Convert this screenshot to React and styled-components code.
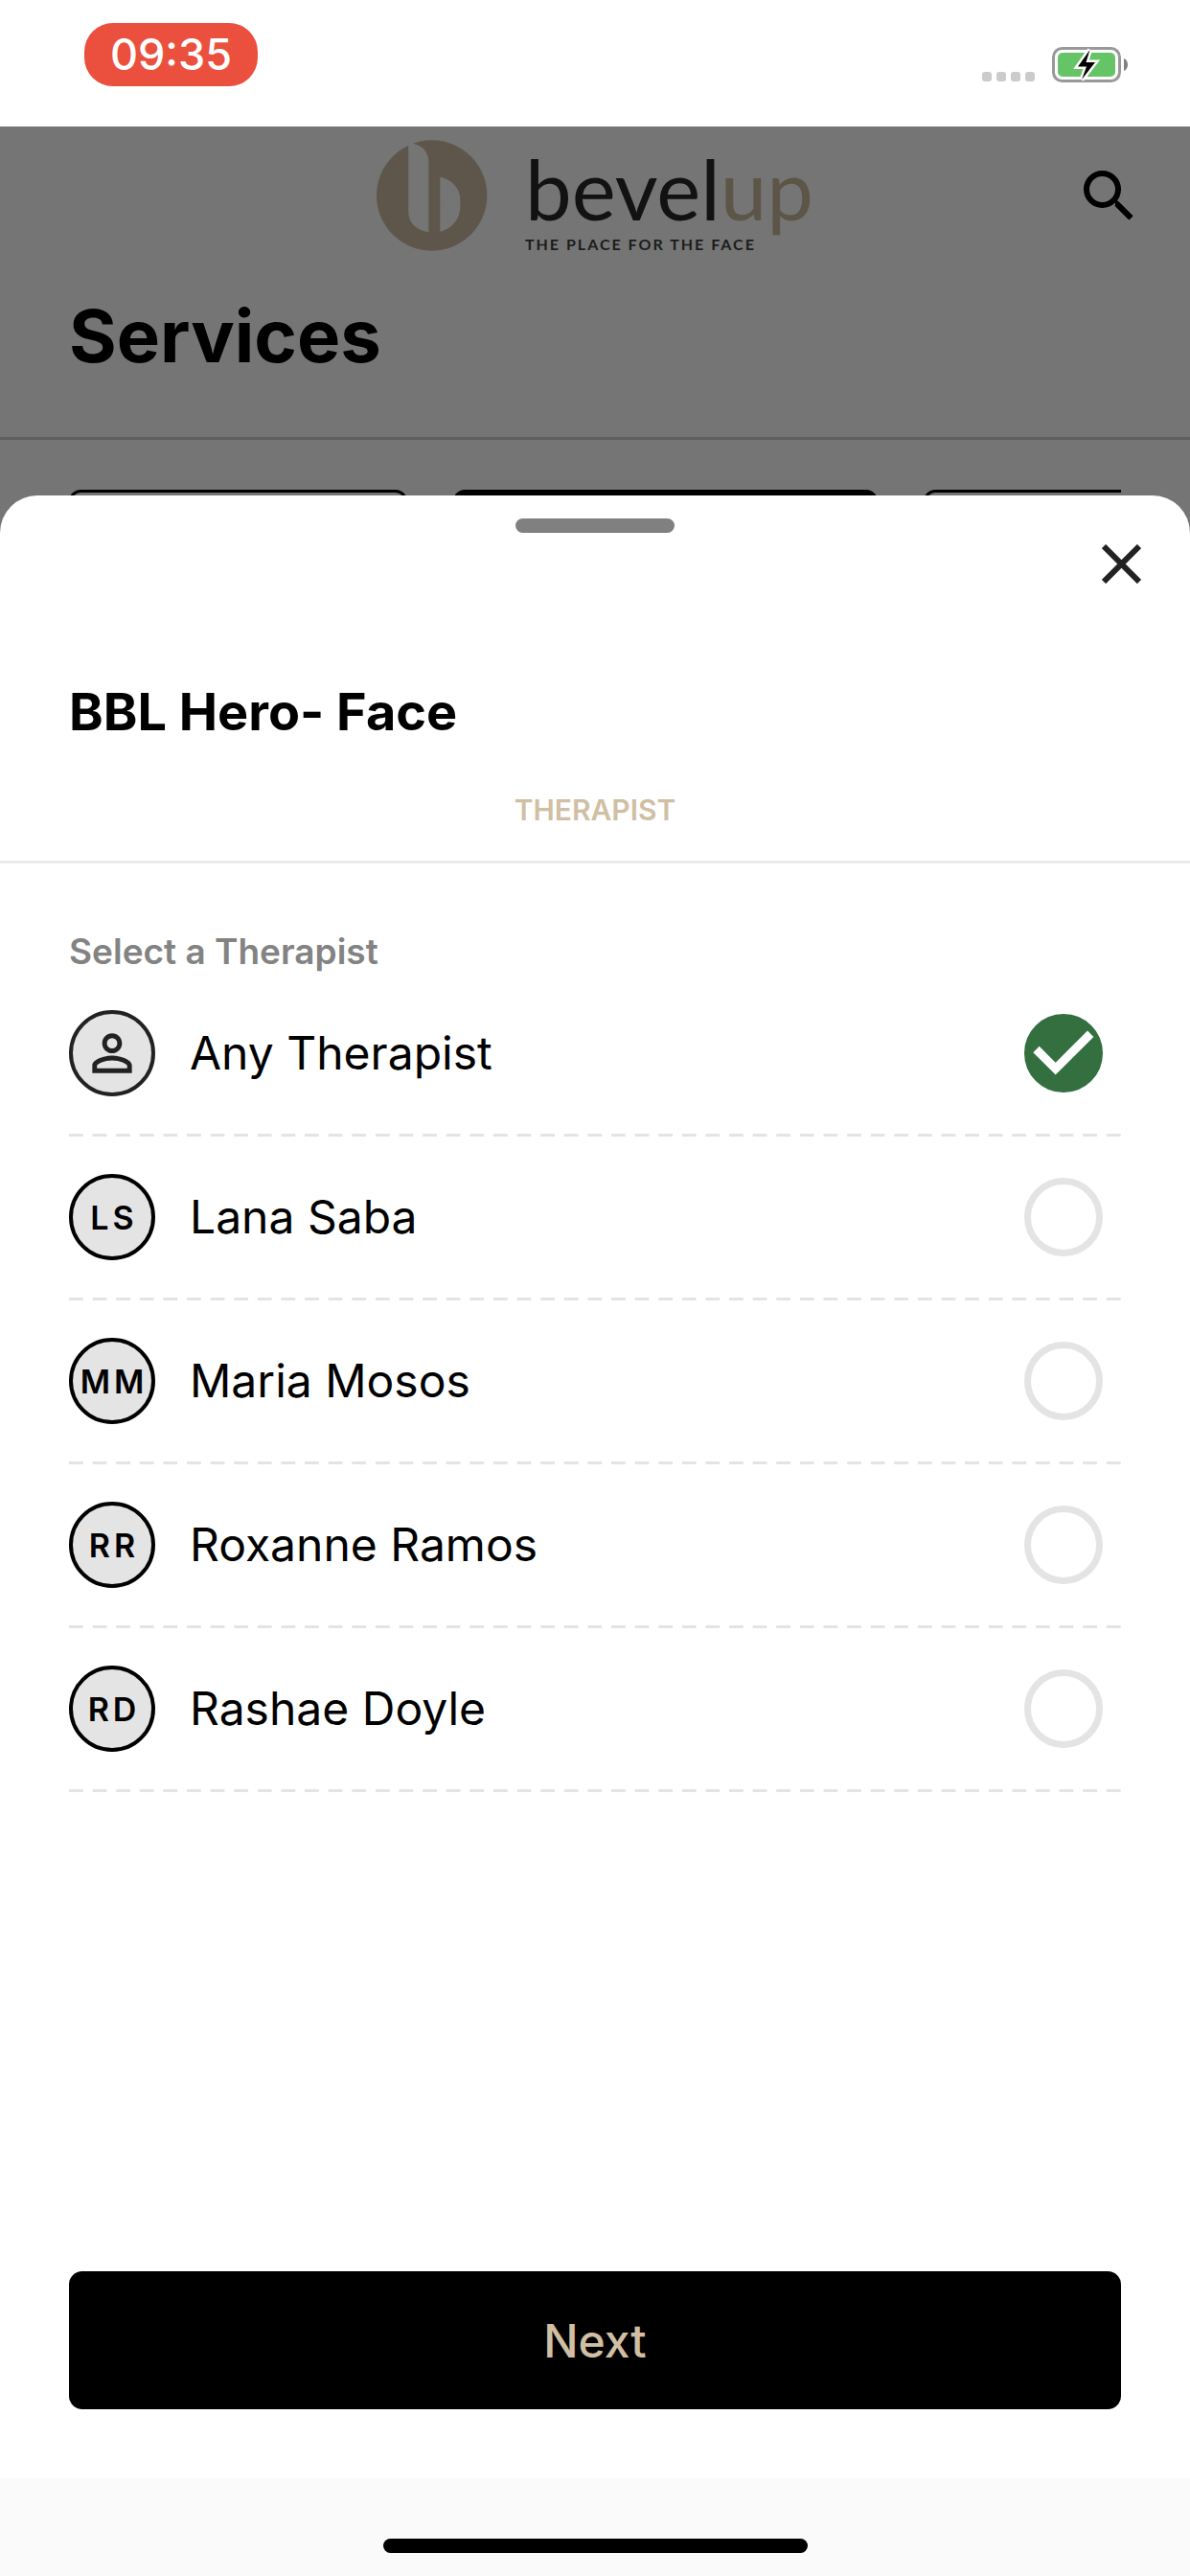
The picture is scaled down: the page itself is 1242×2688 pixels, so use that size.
import React, { useState } from "react";
import styled, { createGlobalStyle } from "styled-components";
import { MdPersonOutline } from "react-icons/md";

const GlobalStyle = createGlobalStyle`
  *, *::before, *::after { box-sizing: border-box; }
  body {
    margin: 0;
    background: #fafafa;
    color: #000;
    font-family: Inter, "Liberation Sans", sans-serif;
  }
  button, input { font: inherit; color: inherit; }
`;

const Screen = styled.div`
  display: flex;
  flex-direction: column;
  min-height: 100vh;
`;

/* Status bar */

const StatusBar = styled.div`
  display: flex;
  justify-content: space-between;
  align-items: flex-start;
  height: 132px;
  padding: 24px 64px 0 88px;
  background: #fff;
`;

const Clock = styled.time`
  display: grid;
  place-items: center;
  width: 181px;
  height: 66px;
  border-radius: 30px;
  background: #eb4f3d;
  color: #fff;
  font-size: 45px;
  font-weight: 500;
  line-height: 66px;
`;

const StatusIcons = styled.div`
  display: flex;
  align-items: flex-end;
  gap: 18px;
  padding-top: 25px;
`;

const Signal = styled.div`
  display: flex;
  gap: 5px;
  padding-bottom: 2px;
`;

const SignalDot = styled.span`
  width: 10px;
  height: 10px;
  border-radius: 3px;
  background: #cbcbcb;
`;

/* Stage: the dimmed page with the sheet stacked over it */

const Stage = styled.main`
  display: grid;
  flex: 1;
  grid-template-columns: minmax(0, 1fr);

  & > * {
    grid-area: 1 / 1;
  }
`;

const DimmedPage = styled.div`
  background: #757575;
`;

const PageHeader = styled.header`
  padding: 14px 0 58px;
  border-bottom: 3px solid #5f5f5f;
`;

const BrandRow = styled.div`
  display: grid;
  grid-template-columns: 1fr auto 1fr;
  align-items: center;
  height: 116px;
  padding: 0 58px;
`;

const Brand = styled.div`
  display: flex;
  grid-column: 2;
  gap: 39px;
  height: 116px;
`;

const BrandText = styled.div`
  padding-top: 3px;
  font-family: Lato, sans-serif;
`;

const Wordmark = styled.div`
  color: #121212;
  font-size: 87px;
  line-height: 96px;
`;

const WordmarkAccent = styled.span`
  color: #5d5548;
`;

const Tagline = styled.div`
  color: #1c1c1c;
  font-size: 16px;
  font-weight: 700;
  letter-spacing: 2px;
  line-height: 20px;
`;

const IconButton = styled.button`
  display: block;
  justify-self: end;
  padding: 0;
  border: 0;
  background: none;
  cursor: pointer;

  svg {
    display: block;
  }
`;

const SearchButton = styled(IconButton)`
  grid-column: 3;
`;

const PageTitle = styled.h1`
  margin: 40px 72px 0;
  font-size: 76px;
  font-weight: 700;
  line-height: 96px;
`;

const Chips = styled.div`
  display: flex;
  gap: 48px;
  margin: 52px 72px 0;
  overflow: hidden;
`;

const Chip = styled.span`
  flex: none;
  width: ${(p) => p.$width}px;
  height: 96px;
  border: 3px solid #000;
  border-radius: 12px;
  background: ${(p) => (p.$active ? "#000" : "transparent")};
`;

/* Sheet */

const Sheet = styled.section`
  display: flex;
  flex-direction: column;
  margin-top: 385px;
  padding: 24px 0 72px;
  border-radius: 39px 39px 0 0;
  background: #fff;
`;

const Grabber = styled.div`
  align-self: center;
  width: 166px;
  height: 15px;
  border-radius: 8px;
  background: #808080;
`;

const SheetBar = styled.div`
  display: flex;
  justify-content: flex-end;
  padding: 12px 51px 0;
`;

const SheetTitle = styled.h2`
  margin: 101px 72px 50px;
  font-size: 54px;
  font-weight: 700;
  line-height: 66px;
`;

const Steps = styled.nav`
  display: flex;
  justify-content: center;
  padding-bottom: 34px;
  border-bottom: 3px solid #ebebeb;
`;

const Step = styled.span`
  color: #d0bfa3;
  font-size: 30px;
  font-weight: 600;
  line-height: 38px;
`;

const Options = styled.fieldset`
  min-width: 0;
  margin: 70px 72px 0;
  padding: 0;
  border: 0;
`;

const OptionsLegend = styled.legend`
  padding: 0;
  color: #838383;
  font-size: 37px;
  font-weight: 600;
  line-height: 44px;
`;

const Option = styled.label`
  display: flex;
  align-items: center;
  gap: 36px;
  height: 171px;
  padding: 0 19px 3px 0;
  background: linear-gradient(90deg, #e4e4e4 15px, transparent 15px) 0 100% /
    calc((100% - 15px) / 44) 3px repeat-x;
  cursor: pointer;
`;

const Avatar = styled.span`
  display: grid;
  flex: none;
  place-items: center;
  width: 90px;
  height: 90px;
  border: 4px solid ${(p) => (p.$soft ? "#222" : "#000")};
  border-radius: 50%;
  background: #e4e4e4;
  color: ${(p) => (p.$soft ? "#222" : "#000")};
  font-size: 34px;
  font-weight: 600;
`;

const Initials = styled.span`
  padding-left: 4px;
  letter-spacing: 4px;
`;

const OptionName = styled.span`
  flex: 1;
  font-size: 48px;
  line-height: 60px;
`;

const RadioBox = styled.span`
  display: grid;
  flex: none;
  width: 82px;
  height: 82px;

  & > * {
    grid-area: 1 / 1;
  }

  svg {
    visibility: hidden;
    pointer-events: none;
  }

  input:checked + svg {
    visibility: visible;
  }
`;

const Radio = styled.input`
  appearance: none;
  width: 82px;
  height: 82px;
  margin: 0;
  border: 7px solid #e4e4e4;
  border-radius: 50%;

  &:checked {
    border-color: #336f3f;
    background: #336f3f;
  }
`;

const NextButton = styled.button`
  height: 144px;
  margin: auto 72px 0;
  border: 0;
  border-radius: 14px;
  background: #000;
  color: #d0bfa3;
  font-size: 48px;
  font-weight: 500;
  cursor: pointer;
`;

const HomeArea = styled.footer`
  display: flex;
  align-items: flex-end;
  justify-content: center;
  height: 102px;
  padding-bottom: 24px;
  background: #fafafa;
`;

const HomeIndicator = styled.div`
  width: 443px;
  height: 15px;
  border-radius: 8px;
  background: #000;
`;

function Battery() {
  return (
    <svg width="80" height="38" viewBox="0 0 80 38" aria-hidden="true">
      <rect x="1.5" y="1.5" width="69" height="34" rx="9" fill="none" stroke="#999" strokeWidth="3" />
      <rect x="6" y="6" width="60" height="25" rx="5" fill="#65c466" />
      <path d="M75 12c2.6 1.2 4 3.6 4 6.5s-1.4 5.3-4 6.5z" fill="#808080" />
      <path
        d="M39.5 3 27 20.500h9L31 34 45 16h-9.500z"
        fill="#000"
        stroke="#fff"
        strokeWidth="5"
        paintOrder="stroke"
      />
    </svg>
  );
}

function BrandMark() {
  return (
    <svg width="116" height="116" viewBox="0 0 116 116" aria-hidden="true">
      <circle cx="57.7" cy="58" r="57.7" fill="#5f564b" />
      <path
        d="M33.300 0V75.500C33.300 86 41.500 94.500 54.300 96.300V23C54.300 13 48 5.500 38 4V0z"
        fill="#757575"
      />
      <path
        d="M66.300 38.700C78.500 41 87.300 50.500 87.300 62.500V69C87.300 83 78.500 93 66.300 95.700z"
        fill="#757575"
      />
    </svg>
  );
}

function SearchIcon() {
  return (
    <svg width="53" height="53" viewBox="0 0 53 53" fill="none" stroke="#000" aria-hidden="true">
      <circle cx="19.5" cy="19.5" r="16.5" strokeWidth="6" />
      <path d="M32 31h3l16.500 16.500-4 4L33 37v-3z" fill="#000" stroke="none" />
      <path d="M34.500 34.500 49 49" strokeWidth="6" />
    </svg>
  );
}

function CloseIcon() {
  return (
    <svg width="41" height="41" viewBox="0 0 41 41" stroke="#222" strokeWidth="6" aria-hidden="true">
      <path d="M2 2 39 39M39 2 2 39" />
    </svg>
  );
}

function CheckMark() {
  return (
    <svg width="82" height="82" viewBox="0 0 82 82" fill="none" aria-hidden="true">
      <path d="M12.500 37 32.700 57.200 69.200 20.700" stroke="#fff" strokeWidth="9" />
    </svg>
  );
}

const therapists = [
  { id: "any", name: "Any Therapist" },
  { id: "ls", name: "Lana Saba", initials: "LS" },
  { id: "mm", name: "Maria Mosos", initials: "MM" },
  { id: "rr", name: "Roxanne Ramos", initials: "RR" },
  { id: "rd", name: "Rashae Doyle", initials: "RD" },
];

const chips = [{ width: 353 }, { width: 443, active: true }, { width: 360 }];

export default function App() {
  const [selected, setSelected] = useState("any");

  return (
    <Screen>
      <GlobalStyle />
      <StatusBar>
        <Clock>09:35</Clock>
        <StatusIcons>
          <Signal>
            <SignalDot />
            <SignalDot />
            <SignalDot />
            <SignalDot />
          </Signal>
          <Battery />
        </StatusIcons>
      </StatusBar>

      <Stage>
        <DimmedPage>
          <PageHeader>
            <BrandRow>
              <Brand>
                <BrandMark />
                <BrandText>
                  <Wordmark>
                    bevel<WordmarkAccent>up</WordmarkAccent>
                  </Wordmark>
                  <Tagline>THE PLACE FOR THE FACE</Tagline>
                </BrandText>
              </Brand>
              <SearchButton type="button" aria-label="Search">
                <SearchIcon />
              </SearchButton>
            </BrandRow>
            <PageTitle>Services</PageTitle>
          </PageHeader>
          <Chips aria-hidden="true">
            {chips.map((chip) => (
              <Chip key={chip.width} $width={chip.width} $active={chip.active} />
            ))}
          </Chips>
        </DimmedPage>

        <Sheet>
          <Grabber />
          <SheetBar>
            <IconButton type="button" aria-label="Close">
              <CloseIcon />
            </IconButton>
          </SheetBar>
          <SheetTitle>BBL Hero- Face</SheetTitle>
          <Steps>
            <Step>THERAPIST</Step>
          </Steps>
          <Options>
            <OptionsLegend>Select a Therapist</OptionsLegend>
            {therapists.map((t) => (
              <Option key={t.id} htmlFor={t.id}>
                <Avatar $soft={!t.initials} aria-hidden="true">
                  {t.initials ? <Initials>{t.initials}</Initials> : <MdPersonOutline size={62} />}
                </Avatar>
                <OptionName>{t.name}</OptionName>
                <RadioBox>
                  <Radio
                    type="radio"
                    name="therapist"
                    id={t.id}
                    checked={selected === t.id}
                    onChange={() => setSelected(t.id)}
                  />
                  <CheckMark />
                </RadioBox>
              </Option>
            ))}
          </Options>
          <NextButton type="button">Next</NextButton>
        </Sheet>
      </Stage>

      <HomeArea>
        <HomeIndicator />
      </HomeArea>
    </Screen>
  );
}
